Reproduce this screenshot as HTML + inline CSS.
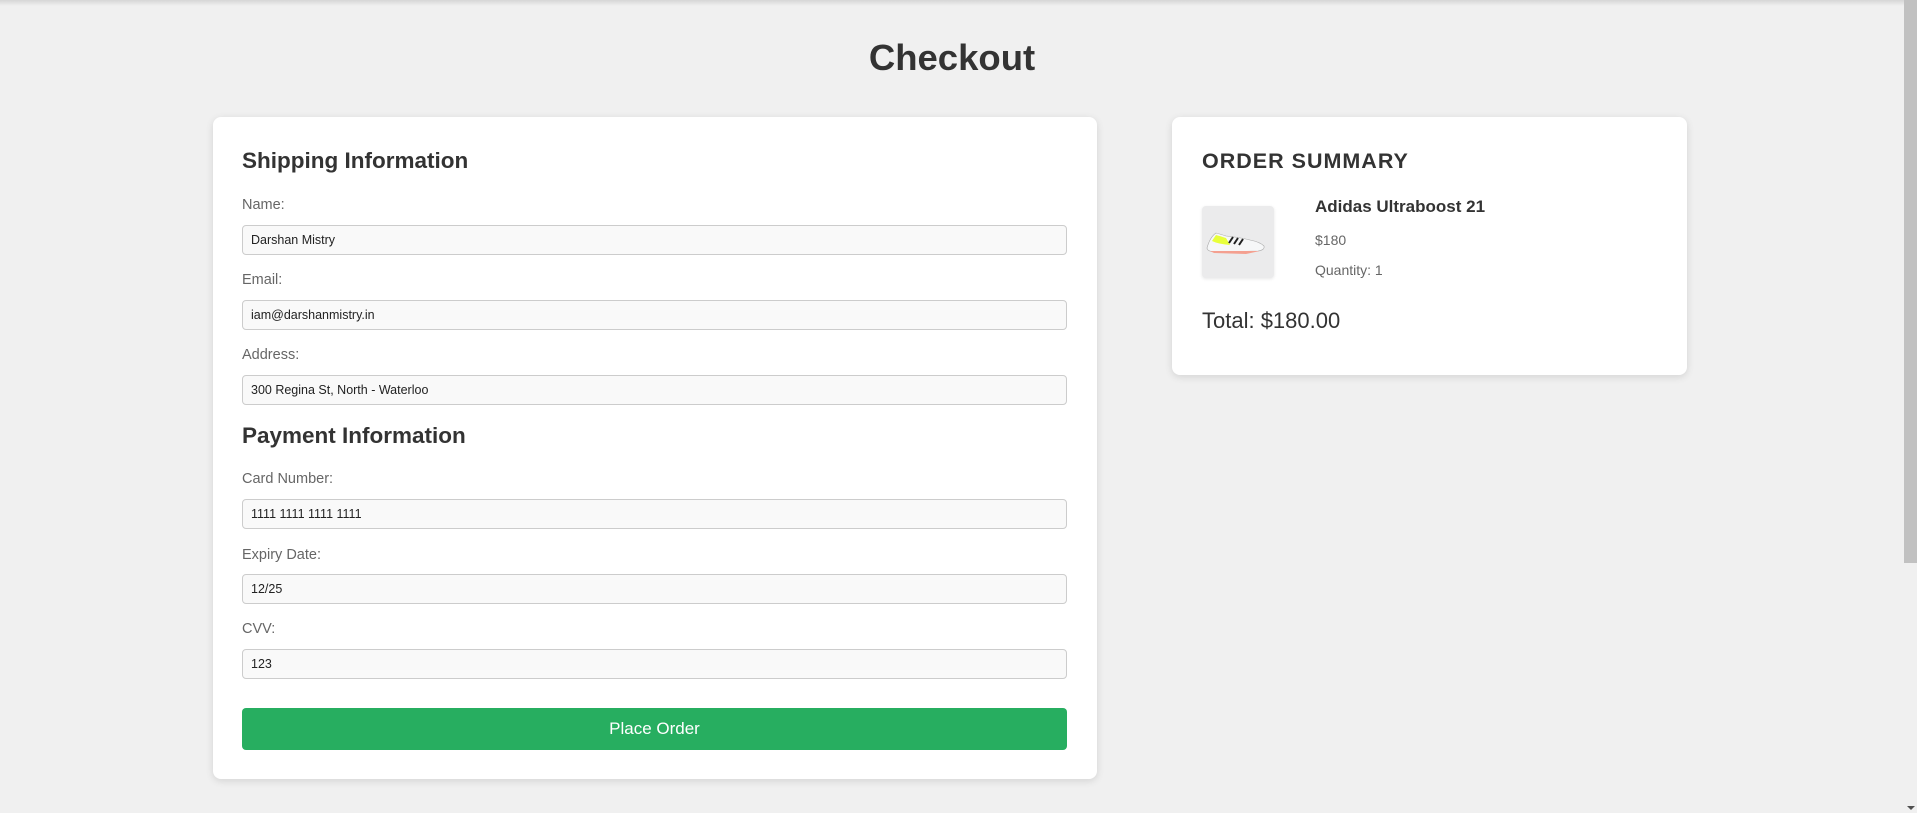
<!DOCTYPE html>
<html><head><meta charset="utf-8"><style>
*{box-sizing:border-box;margin:0;padding:0}
html,body{width:1917px;height:813px;overflow:hidden;background:#f0f0f0;font-family:"Liberation Sans",Arial,sans-serif;color:#333}
.topsh{position:absolute;left:0;top:0;width:1904px;height:6px;background:linear-gradient(#d6d6d6,rgba(240,240,240,0))}
.sb{position:absolute;left:1904px;top:0;width:13px;height:563px;background:#c1c1c1}
.arr{position:absolute;left:1907px;top:806px;width:0;height:0;border-left:4px solid transparent;border-right:4px solid transparent;border-top:4px solid #505050}
h1{position:absolute;left:0;width:1904px;top:36px;text-align:center;font-size:36.5px;line-height:44px;font-weight:bold;color:#333}
.card{position:absolute;background:#fff;border-radius:8px;box-shadow:0 2px 8px rgba(0,0,0,.12)}
.a{position:absolute;white-space:nowrap}
.h2{font-size:22.5px;font-weight:bold;line-height:28px;color:#333}
.lb{font-size:14.5px;line-height:18px;color:#666}
.in{position:absolute;left:29px;width:825px;height:30px;border:1px solid #ccc;border-radius:4px;background:#f9f9f9;font-size:12.5px;line-height:28px;padding-left:8px;color:#222}
.btn{position:absolute;left:29px;width:825px;height:42px;background:#27ae60;border-radius:4px;color:#fff;font-size:17px;line-height:42px;text-align:center}
</style></head><body>
<div class="topsh"></div>
<div class="sb"></div><div class="arr"></div>
<h1>Checkout</h1>
<div class="card" style="left:213px;top:117px;width:884px;height:662px">
 <div class="a h2" style="left:29px;top:30px">Shipping Information</div>
 <div class="a lb" style="left:29px;top:79px">Name:</div>
 <div class="in" style="top:108px">Darshan Mistry</div>
 <div class="a lb" style="left:29px;top:154px">Email:</div>
 <div class="in" style="top:183px">iam@darshanmistry.in</div>
 <div class="a lb" style="left:29px;top:229px">Address:</div>
 <div class="in" style="top:258px">300 Regina St, North - Waterloo</div>
 <div class="a h2" style="left:29px;top:305px">Payment Information</div>
 <div class="a lb" style="left:29px;top:353px">Card Number:</div>
 <div class="in" style="top:382px">1111 1111 1111 1111</div>
 <div class="a lb" style="left:29px;top:429px">Expiry Date:</div>
 <div class="in" style="top:457px">12/25</div>
 <div class="a lb" style="left:29px;top:503px">CVV:</div>
 <div class="in" style="top:532px">123</div>
 <div class="btn" style="top:591px">Place Order</div>
</div>
<div class="card" style="left:1172px;top:117px;width:515px;height:258px">
 <div class="a" style="left:30px;top:31px;font-size:21.5px;line-height:26px;font-weight:bold;letter-spacing:1px">ORDER SUMMARY</div>
 <div class="a" style="left:30px;top:89px;width:72px;height:72px;background:#ebebec;border-radius:4px;box-shadow:0 1px 3px rgba(0,0,0,.1)">
  <svg width="72" height="72" viewBox="0 0 72 72">
   <path d="M5 42 Q8 31 14 27 Q18 28 24 30 Q36 31 48 34 Q58 36 62 40 Q63 44 56 45 L12 46 Q5 45 5 42Z" fill="#f6f7f8" stroke="#aaa" stroke-width=".6"/>
   <path d="M10 35 Q16 38 28 39 L24 32 Q18 30 14 29Z" fill="#e8ff3a"/>
   <path d="M8 45 L58 45 L44 48 L12 47Z" fill="#f4a090"/>
   <path d="M27 37 L31 31 M32 38 L36 32 M37 39 L41 33" stroke="#222" stroke-width="2"/>
  </svg>
 </div>
 <div class="a" style="left:143px;top:80px;font-size:17px;line-height:20px;font-weight:bold">Adidas Ultraboost 21</div>
 <div class="a" style="left:143px;top:114px;font-size:14px;line-height:18px;color:#666">$180</div>
 <div class="a" style="left:143px;top:144px;font-size:14px;line-height:18px;color:#666">Quantity: 1</div>
 <div class="a" style="left:30px;top:190px;font-size:22px;line-height:28px;color:#333">Total: $180.00</div>
</div>
</body></html>
